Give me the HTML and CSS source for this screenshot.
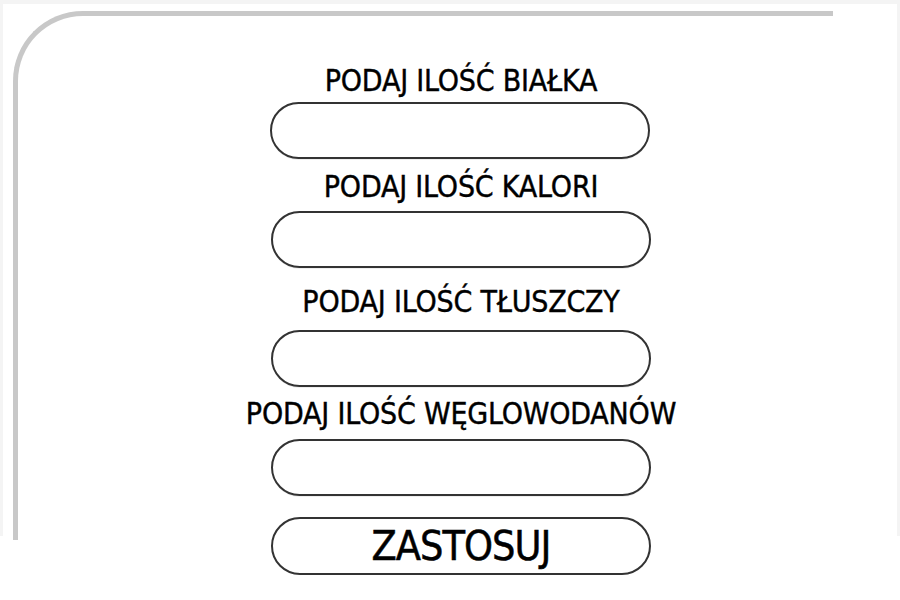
FILE: index.html
```html
<!DOCTYPE html>
<html lang="pl">
<head>
<meta charset="utf-8">
<title>Makro</title>
<link rel="stylesheet" href="styles.css">
</head>
<body>
<div class="page">
  <div class="sheet">
    <div class="stage">
      <div class="card"></div>
      <form class="form">
        <label class="label l1">PODAJ ILOŚĆ BIAŁKA</label>
        <input class="field f1" type="text">
        <label class="label l2">PODAJ ILOŚĆ KALORI</label>
        <input class="field f2" type="text">
        <label class="label l3">PODAJ ILOŚĆ TŁUSZCZY</label>
        <input class="field f3" type="text">
        <label class="label l4">PODAJ ILOŚĆ WĘGLOWODANÓW</label>
        <input class="field f4" type="text">
        <button class="apply" type="button">ZASTOSUJ</button>
      </form>
    </div>
  </div>
</div>
</body>
</html>
```
FILE: styles.css
```css
html, body {
  margin: 0;
  padding: 0;
  background: #ffffff;
}
body {
  width: 900px;
  height: 600px;
  overflow: hidden;
  font-family: "DejaVu Sans Condensed", "DejaVu Sans", sans-serif;
}
.page {
  background: #f4f4f4;
  padding: 4px 3px 0 3px;
  height: 532px;
}
.sheet {
  background: #ffffff;
  height: 532px;
}
.stage {
  display: grid;
  grid-template: 1fr / 1fr;
}
.card {
  grid-area: 1 / 1;
  margin: 7px 0 0 10px;
  width: 815px;
  height: 524px;
  border-top: 5px solid #c8c8c8;
  border-left: 5px solid #c8c8c8;
  border-top-left-radius: 70px;
}
.form {
  grid-area: 1 / 1;
  margin: 0 0 0 208px;
  width: 500px;
  display: flex;
  flex-direction: column;
  align-items: center;
  padding-top: 60px;
}
.label {
  font-size: 30px;
  line-height: 34px;
  letter-spacing: -0.2px;
  color: #000;
  -webkit-text-stroke: 0.4px #000;
}
.field {
  box-sizing: border-box;
  width: 380px;
  height: 57px;
  border: 2px solid #333;
  border-radius: 29px;
  background: #fff;
  margin: 0;
  padding: 0 20px;
  outline: none;
  box-shadow: 0 2px 0 -1px #eeeeee;
}
.l1 { margin-bottom: 4px; }
.l2 { margin-top: 11px; margin-bottom: 7px; }
.l3 { margin-top: 17px; margin-bottom: 11px; }
.l4 { margin-top: 10px; margin-bottom: 8px; }
.f1 { margin-left: -3px; }
.apply {
  box-sizing: border-box;
  width: 380px;
  height: 58px;
  margin: 21px 0 0 0;
  border: 2px solid #333;
  border-radius: 29px;
  background: #fff;
  font-family: inherit;
  font-size: 41px;
  letter-spacing: -1px;
  color: #000;
  -webkit-text-stroke: 0.5px #000;
  padding: 0;
}
```
